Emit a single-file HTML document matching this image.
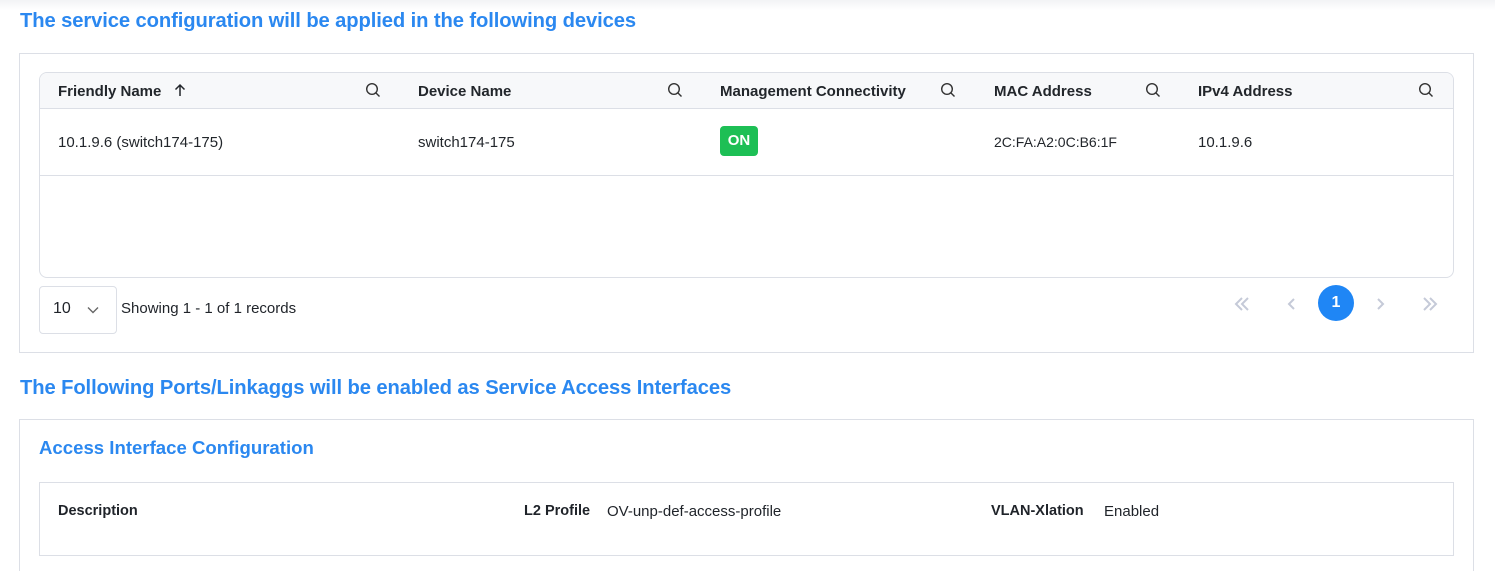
<!DOCTYPE html>
<html><head><style>
*{box-sizing:border-box;margin:0;padding:0}
html,body{width:1495px;height:571px;overflow:hidden}
body{background:#fff;font-family:"Liberation Sans",sans-serif;color:#1f2329;position:relative}
.abs{position:absolute}
h2{position:absolute;font-size:20.2px;font-weight:bold;color:#2b88f0;letter-spacing:-0.1px}
.box{position:absolute;border:1px solid #dcdfe6}
.th{position:absolute;top:83px;font-size:15px;font-weight:bold;color:#22262b}
.td{position:absolute;top:134px;font-size:15px;color:#22262b}
svg.s{position:absolute;top:82px}
</style></head><body>
<div class="abs" style="left:0;top:0;width:1495px;height:10px;background:linear-gradient(#f2f3f5,#fff)"></div>
<h2 style="left:20px;top:10px">The service configuration will be applied in the following devices</h2>
<div class="box" style="left:19px;top:53px;width:1455px;height:300px"></div>
<div class="box" style="left:39px;top:72px;width:1415px;height:206px;border-radius:8px;overflow:hidden">
 <div style="height:36px;background:#f7f8fa;border-bottom:1px solid #dcdfe6"></div>
 <div style="height:67px;border-bottom:1px solid #dcdfe6"></div>
</div>
<div class="th" style="left:58px">Friendly Name</div>
<svg class="abs" style="left:173px;top:83px" width="14" height="14" viewBox="0 0 14 14"><path d="M7 13V2M2.5 6.5L7 2l4.5 4.5" stroke="#22262b" stroke-width="1.5" fill="none"/></svg>
<div class="th" style="left:418px">Device Name</div>
<div class="th" style="left:720px">Management Connectivity</div>
<div class="th" style="left:994px">MAC Address</div>
<div class="th" style="left:1198px">IPv4 Address</div>
<svg class="s" style="left:365px" width="16" height="16" viewBox="0 0 16 16"><circle cx="7" cy="7" r="5.3" stroke="#333" stroke-width="1.4" fill="none"/><path d="M11 11l3.5 3.5" stroke="#333" stroke-width="1.4"/></svg>
<svg class="s" style="left:667px" width="16" height="16" viewBox="0 0 16 16"><circle cx="7" cy="7" r="5.3" stroke="#333" stroke-width="1.4" fill="none"/><path d="M11 11l3.5 3.5" stroke="#333" stroke-width="1.4"/></svg>
<svg class="s" style="left:940px" width="16" height="16" viewBox="0 0 16 16"><circle cx="7" cy="7" r="5.3" stroke="#333" stroke-width="1.4" fill="none"/><path d="M11 11l3.5 3.5" stroke="#333" stroke-width="1.4"/></svg>
<svg class="s" style="left:1145px" width="16" height="16" viewBox="0 0 16 16"><circle cx="7" cy="7" r="5.3" stroke="#333" stroke-width="1.4" fill="none"/><path d="M11 11l3.5 3.5" stroke="#333" stroke-width="1.4"/></svg>
<svg class="s" style="left:1418px" width="16" height="16" viewBox="0 0 16 16"><circle cx="7" cy="7" r="5.3" stroke="#333" stroke-width="1.4" fill="none"/><path d="M11 11l3.5 3.5" stroke="#333" stroke-width="1.4"/></svg>
<div class="td" style="left:58px">10.1.9.6 (switch174-175)</div>
<div class="td" style="left:418px">switch174-175</div>
<div class="abs" style="left:720px;top:126px;width:38px;height:30px;background:#1dbf55;border-radius:4px;color:#fff;font-weight:bold;font-size:15px;text-align:center;line-height:30px">ON</div>
<div class="td" style="left:994px;font-size:14px">2C:FA:A2:0C:B6:1F</div>
<div class="td" style="left:1198px">10.1.9.6</div>
<div class="box" style="left:39px;top:286px;width:78px;height:48px;border-radius:4px"></div>
<div class="abs" style="left:53px;top:300px;font-size:16px">10</div>
<svg class="abs" style="left:86px;top:305px" width="14" height="10" viewBox="0 0 14 10"><path d="M2 2.5l5 5 5-5" stroke="#666" stroke-width="1.4" fill="none"/></svg>
<div class="abs" style="left:121px;top:300px;font-size:15px">Showing 1 - 1 of 1 records</div>
<svg class="abs" style="left:1232px;top:295px" width="20" height="18" viewBox="0 0 20 18"><path d="M10 3L4 9l6 6M16 3l-6 6 6 6" stroke="#c5cad8" stroke-width="2" fill="none"/></svg>
<svg class="abs" style="left:1286px;top:295px" width="12" height="18" viewBox="0 0 12 18"><path d="M8 4L3 9l5 5" stroke="#c5cad8" stroke-width="2" fill="none"/></svg>
<div class="abs" style="left:1318px;top:285px;width:36px;height:36px;border-radius:50%;background:#1f86f5;color:#fff;font-weight:bold;font-size:16px;text-align:center;line-height:36px">1</div>
<svg class="abs" style="left:1374px;top:295px" width="12" height="18" viewBox="0 0 12 18"><path d="M4 4l5 5-5 5" stroke="#c5cad8" stroke-width="2" fill="none"/></svg>
<svg class="abs" style="left:1420px;top:295px" width="20" height="18" viewBox="0 0 20 18"><path d="M4 3l6 6-6 6M10 3l6 6-6 6" stroke="#c5cad8" stroke-width="2" fill="none"/></svg>
<h2 style="left:20px;top:377px">The Following Ports/Linkaggs will be enabled as Service Access Interfaces</h2>
<div class="box" style="left:19px;top:419px;width:1455px;height:170px"></div>
<div class="abs" style="left:39px;top:437px;font-size:18.6px;font-weight:bold;color:#2b88f0">Access Interface Configuration</div>
<div class="box" style="left:39px;top:482px;width:1415px;height:74px"></div>
<div class="abs" style="left:58px;top:503px;font-size:14.5px;font-weight:bold">Description</div>
<div class="abs" style="left:524px;top:503px;font-size:14.5px;font-weight:bold">L2 Profile</div>
<div class="abs" style="left:607px;top:503px;font-size:15px">OV-unp-def-access-profile</div>
<div class="abs" style="left:991px;top:503px;font-size:14.5px;font-weight:bold">VLAN-Xlation</div>
<div class="abs" style="left:1104px;top:503px;font-size:15px">Enabled</div>
</body></html>
